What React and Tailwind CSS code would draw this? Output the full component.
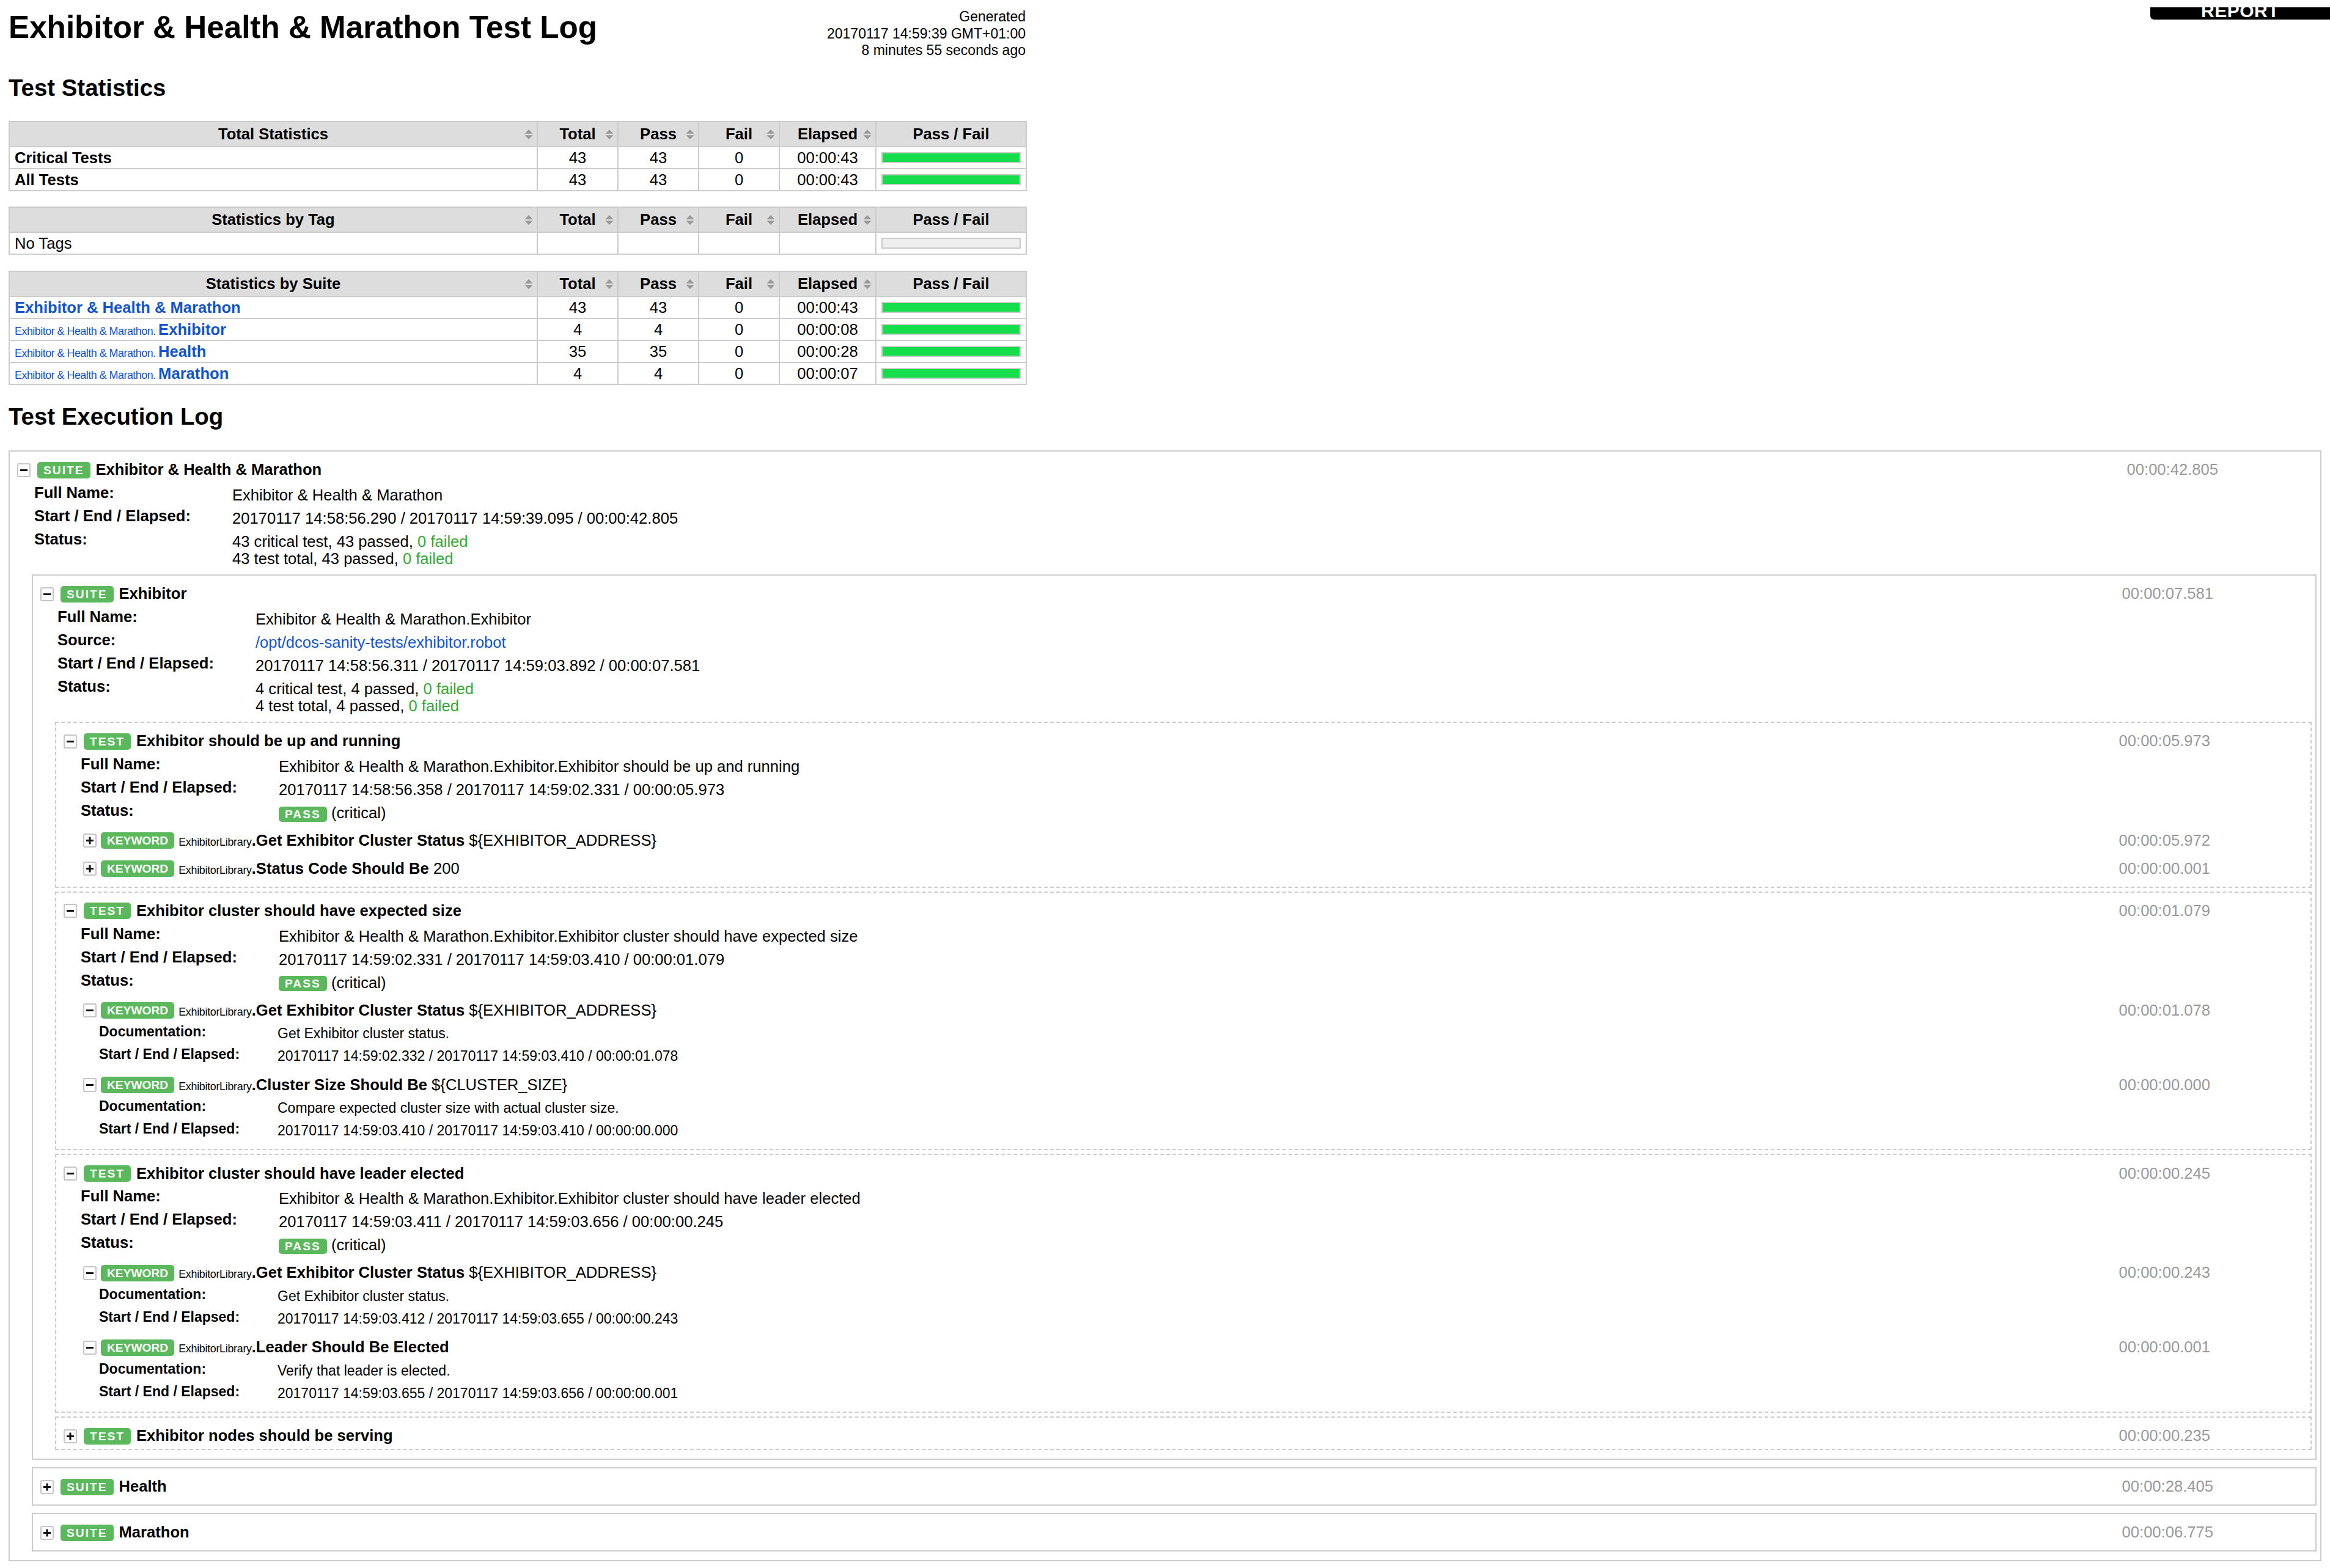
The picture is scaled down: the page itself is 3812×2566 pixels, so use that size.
import React from "react";

const GREEN = "text-[#3a3]";

function SortIcon() {
  return (
    <svg
      width="14"
      height="17"
      viewBox="0 0 14 17"
      className="absolute right-[6px] top-1/2 -translate-y-1/2"
    >
      <path d="M0.5 7.2 L7 0.5 L13.5 7.2 Z" fill="#999" />
      <path d="M0.5 9.8 L7 16.5 L13.5 9.8 Z" fill="#999" />
    </svg>
  );
}

const thBase =
  "relative border-2 border-[#ccc] bg-[#ddd] py-[5px] px-[8px] font-bold leading-[29px] text-center";
const tdBase = "border-2 border-[#ccc] py-[2.5px] px-[8px] leading-[29px] align-middle";

function StatTable({ title, rows, className }) {
  return (
    <table className={`table-fixed border-collapse w-[1664px] ${className}`}>
      <colgroup>
        <col className="w-[864px]" />
        <col className="w-[132px]" />
        <col className="w-[132px]" />
        <col className="w-[132px]" />
        <col className="w-[158px]" />
        <col className="w-[246px]" />
      </colgroup>
      <thead>
        <tr>
          <th className={thBase}>
            {title}
            <SortIcon />
          </th>
          <th className={thBase}>
            Total
            <SortIcon />
          </th>
          <th className={thBase}>
            Pass
            <SortIcon />
          </th>
          <th className={thBase}>
            Fail
            <SortIcon />
          </th>
          <th className={thBase}>
            Elapsed
            <SortIcon />
          </th>
          <th className={thBase}>Pass / Fail</th>
        </tr>
      </thead>
      <tbody>
        {rows.map((r, i) => (
          <tr key={i}>
            <td className={`${tdBase} text-left whitespace-nowrap`}>{r.name}</td>
            <td className={`${tdBase} text-center`}>{r.total}</td>
            <td className={`${tdBase} text-center`}>{r.pass}</td>
            <td className={`${tdBase} text-center`}>{r.fail}</td>
            <td className={`${tdBase} text-center`}>{r.elapsed}</td>
            <td className={tdBase}>
              <div
                className={`h-[18px] border-2 border-[#ccc] ${
                  r.empty ? "bg-[#eee]" : "bg-[#16dd4b]"
                }`}
              />
            </td>
          </tr>
        ))}
      </tbody>
    </table>
  );
}

function SuiteLink({ parent, name }) {
  return (
    <span className="text-[#15c]">
      {parent && (
        <span className="text-[17.9px] leading-[18px] tracking-[-0.5px]">{parent}. </span>
      )}
      <span className="font-bold">{name}</span>
    </span>
  );
}

function Toggle({ open }) {
  return (
    <span className="flex items-center justify-center w-[22px] h-[23px] shrink-0 border-2 border-[#c6c6c6] rounded-[3px] bg-white">
      <svg width="12" height="13" viewBox="0 0 12 13">
        <rect x="0" y="5" width="12" height="3" fill="#111" />
        {!open && <rect x="4.5" y="0.5" width="3" height="12" fill="#111" />}
      </svg>
    </span>
  );
}

function Tag({ children, tight }) {
  return (
    <span
      className={`inline-block bg-[#5cb85c] text-white font-bold text-[19.2px] leading-[19px] py-[4px] px-[10px] rounded-[5px] ${
        tight ? "" : "tracking-[2px]"
      }`}
    >
      {children}
    </span>
  );
}

function PassTag() {
  return (
    <span className="inline-block align-middle bg-[#5cb85c] text-white font-bold text-[19.2px] leading-[17px] py-[4px] px-[10px] rounded-[5px] tracking-[2px]">
      PASS
    </span>
  );
}

function Head({ open, tag, name, elapsed, kind }) {
  const pad =
    kind === "kw"
      ? "pl-[8px] pr-[158px]"
      : kind === "test"
      ? "pl-[12px] pr-[164px]"
      : "pl-[12px] pr-[167px]";
  const g1 = kind === "kw" ? "ml-[7px]" : "ml-[11px]";
  const g2 = kind === "kw" ? "ml-[7px]" : "ml-[9px]";
  return (
    <div className={`flex items-center h-[30px] ${pad}`}>
      <Toggle open={open} />
      <span className={`${g1} flex`}>
        <Tag tight={kind === "kw"}>{tag}</Tag>
      </span>
      <span className={`${g2} whitespace-nowrap`}>{name}</span>
      <span className="ml-auto text-[#999] whitespace-nowrap">{elapsed}</span>
    </div>
  );
}

function Meta({ rows }) {
  return (
    <div className="ml-[40px] mt-[4px]">
      {rows.map(([k, v], i) => (
        <div key={i} className="flex pb-[2px]">
          <div className="w-[324px] shrink-0 font-bold pt-[4px] leading-[29px]">{k}</div>
          <div className="pt-[8px] leading-[28px]">{v}</div>
        </div>
      ))}
    </div>
  );
}

function KwMeta({ rows }) {
  return (
    <div className="ml-[34px] mt-[2px] text-[23px]">
      {rows.map(([k, v], i) => (
        <div key={i} className="flex pb-[3px]">
          <div className="w-[292px] shrink-0 font-bold pt-[5px] leading-[27px]">{k}</div>
          <div className="pt-[8px] leading-[26px]">{v}</div>
        </div>
      ))}
    </div>
  );
}

function Suite({ open, name, elapsed, meta, children, gap }) {
  return (
    <div className="border-2 border-[#ccc] pt-[15px] pb-[14px]">
      <Head
        open={open}
        tag="SUITE"
        kind="suite"
        name={<span className="font-bold">{name}</span>}
        elapsed={elapsed}
      />
      {open && (
        <>
          <Meta rows={meta} />
          <div className={`ml-[36px] mr-[6px] mt-[10px] flex flex-col ${gap}`}>{children}</div>
        </>
      )}
    </div>
  );
}

function Test({ open, name, elapsed, meta, children }) {
  return (
    <div className="border-2 border-dashed border-[#ccc] pt-[15px] pb-[6px]">
      <Head
        open={open}
        tag="TEST"
        kind="test"
        name={<span className="font-bold">{name}</span>}
        elapsed={elapsed}
      />
      {open && (
        <>
          <Meta rows={meta} />
          <div className="ml-[36px] mr-[6px] mt-[6px] flex flex-col">{children}</div>
        </>
      )}
    </div>
  );
}

function Kw({ open, name, args, elapsed, doc, time }) {
  return (
    <div className="pt-[8px] pb-[8px]">
      <Head
        open={open}
        tag="KEYWORD"
        kind="kw"
        name={
          <>
            <span className="text-[17.9px] leading-[18px] tracking-[-0.3px]">ExhibitorLibrary</span>
            <span className="font-bold">.{name}</span>
            {args ? " " + args : ""}
          </>
        }
        elapsed={elapsed}
      />
      {open && (
        <KwMeta
          rows={[
            ["Documentation:", doc],
            ["Start / End / Elapsed:", time],
          ]}
        />
      )}
    </div>
  );
}

function Status({ crit, total }) {
  return (
    <>
      {crit} critical test, {crit} passed, <span className={GREEN}>0 failed</span>
      <br />
      {total} test total, {total} passed, <span className={GREEN}>0 failed</span>
    </>
  );
}

const PASS = (
  <>
    <PassTag /> (critical)
  </>
);

const EX = "${EXHIBITOR_ADDRESS}";
const CS = "${CLUSTER_SIZE}";

export default function App() {
  return (
    <div className="relative min-h-[2566px] bg-white px-[14px] text-[25.6px] leading-[1.15] text-black font-['Liberation_Sans',Arial,Helvetica,sans-serif]">
      <div className="absolute top-0 right-0 w-[294px] h-[20px] overflow-hidden bg-black rounded-bl-[6px] text-center text-white font-bold text-[30px] leading-[12px] tracking-[0.5px]">
        REPORT
      </div>

      <div className="flex justify-between w-[1664px] h-[77px] mt-[12px]">
        <h1 className="text-[51.2px] font-bold leading-[59px] pt-[3px] whitespace-nowrap">
          Exhibitor &amp; Health &amp; Marathon Test Log
        </h1>
        <div className="text-[23px] leading-[27.5px] text-right pt-[2px] whitespace-nowrap">
          Generated
          <br />
          20170117 14:59:39 GMT+01:00
          <br />8 minutes 55 seconds ago
        </div>
      </div>

      <h2 className="text-[38.4px] font-bold leading-[44px] mt-[33px]">Test Statistics</h2>

      <StatTable
        className="mt-[32px]"
        title="Total Statistics"
        rows={[
          { name: <span className="font-bold">Critical Tests</span>, total: 43, pass: 43, fail: 0, elapsed: "00:00:43" },
          { name: <span className="font-bold">All Tests</span>, total: 43, pass: 43, fail: 0, elapsed: "00:00:43" },
        ]}
      />
      <StatTable
        className="mt-[25px]"
        title="Statistics by Tag"
        rows={[{ name: "No Tags", total: "", pass: "", fail: "", elapsed: "", empty: true }]}
      />
      <StatTable
        className="mt-[26px]"
        title="Statistics by Suite"
        rows={[
          { name: <SuiteLink name="Exhibitor & Health & Marathon" />, total: 43, pass: 43, fail: 0, elapsed: "00:00:43" },
          { name: <SuiteLink parent="Exhibitor & Health & Marathon" name="Exhibitor" />, total: 4, pass: 4, fail: 0, elapsed: "00:00:08" },
          { name: <SuiteLink parent="Exhibitor & Health & Marathon" name="Health" />, total: 35, pass: 35, fail: 0, elapsed: "00:00:28" },
          { name: <SuiteLink parent="Exhibitor & Health & Marathon" name="Marathon" />, total: 4, pass: 4, fail: 0, elapsed: "00:00:07" },
        ]}
      />

      <h2 className="text-[38.4px] font-bold leading-[44px] mt-[30px]">Test Execution Log</h2>

      <div className="mt-[33px]">
        <Suite
          open
          name="Exhibitor & Health & Marathon"
          elapsed="00:00:42.805"
          gap="gap-[12px]"
          meta={[
            ["Full Name:", "Exhibitor & Health & Marathon"],
            ["Start / End / Elapsed:", "20170117 14:58:56.290 / 20170117 14:59:39.095 / 00:00:42.805"],
            ["Status:", <Status crit={43} total={43} />],
          ]}
        >
          <Suite
            open
            name="Exhibitor"
            elapsed="00:00:07.581"
            gap="gap-[6px]"
            meta={[
              ["Full Name:", "Exhibitor & Health & Marathon.Exhibitor"],
              ["Source:", <span className="text-[#15c]">/opt/dcos-sanity-tests/exhibitor.robot</span>],
              ["Start / End / Elapsed:", "20170117 14:58:56.311 / 20170117 14:59:03.892 / 00:00:07.581"],
              ["Status:", <Status crit={4} total={4} />],
            ]}
          >
            <Test
              open
              name="Exhibitor should be up and running"
              elapsed="00:00:05.973"
              meta={[
                ["Full Name:", "Exhibitor & Health & Marathon.Exhibitor.Exhibitor should be up and running"],
                ["Start / End / Elapsed:", "20170117 14:58:56.358 / 20170117 14:59:02.331 / 00:00:05.973"],
                ["Status:", PASS],
              ]}
            >
              <Kw name="Get Exhibitor Cluster Status" args={EX} elapsed="00:00:05.972" />
              <Kw name="Status Code Should Be" args="200" elapsed="00:00:00.001" />
            </Test>
            <Test
              open
              name="Exhibitor cluster should have expected size"
              elapsed="00:00:01.079"
              meta={[
                ["Full Name:", "Exhibitor & Health & Marathon.Exhibitor.Exhibitor cluster should have expected size"],
                ["Start / End / Elapsed:", "20170117 14:59:02.331 / 20170117 14:59:03.410 / 00:00:01.079"],
                ["Status:", PASS],
              ]}
            >
              <Kw
                open
                name="Get Exhibitor Cluster Status"
                args={EX}
                elapsed="00:00:01.078"
                doc="Get Exhibitor cluster status."
                time="20170117 14:59:02.332 / 20170117 14:59:03.410 / 00:00:01.078"
              />
              <Kw
                open
                name="Cluster Size Should Be"
                args={CS}
                elapsed="00:00:00.000"
                doc="Compare expected cluster size with actual cluster size."
                time="20170117 14:59:03.410 / 20170117 14:59:03.410 / 00:00:00.000"
              />
            </Test>
            <Test
              open
              name="Exhibitor cluster should have leader elected"
              elapsed="00:00:00.245"
              meta={[
                ["Full Name:", "Exhibitor & Health & Marathon.Exhibitor.Exhibitor cluster should have leader elected"],
                ["Start / End / Elapsed:", "20170117 14:59:03.411 / 20170117 14:59:03.656 / 00:00:00.245"],
                ["Status:", PASS],
              ]}
            >
              <Kw
                open
                name="Get Exhibitor Cluster Status"
                args={EX}
                elapsed="00:00:00.243"
                doc="Get Exhibitor cluster status."
                time="20170117 14:59:03.412 / 20170117 14:59:03.655 / 00:00:00.243"
              />
              <Kw
                open
                name="Leader Should Be Elected"
                elapsed="00:00:00.001"
                doc="Verify that leader is elected."
                time="20170117 14:59:03.655 / 20170117 14:59:03.656 / 00:00:00.001"
              />
            </Test>
            <Test name="Exhibitor nodes should be serving" elapsed="00:00:00.235" />
          </Suite>
          <Suite name="Health" elapsed="00:00:28.405" />
          <Suite name="Marathon" elapsed="00:00:06.775" />
        </Suite>
      </div>
    </div>
  );
}
